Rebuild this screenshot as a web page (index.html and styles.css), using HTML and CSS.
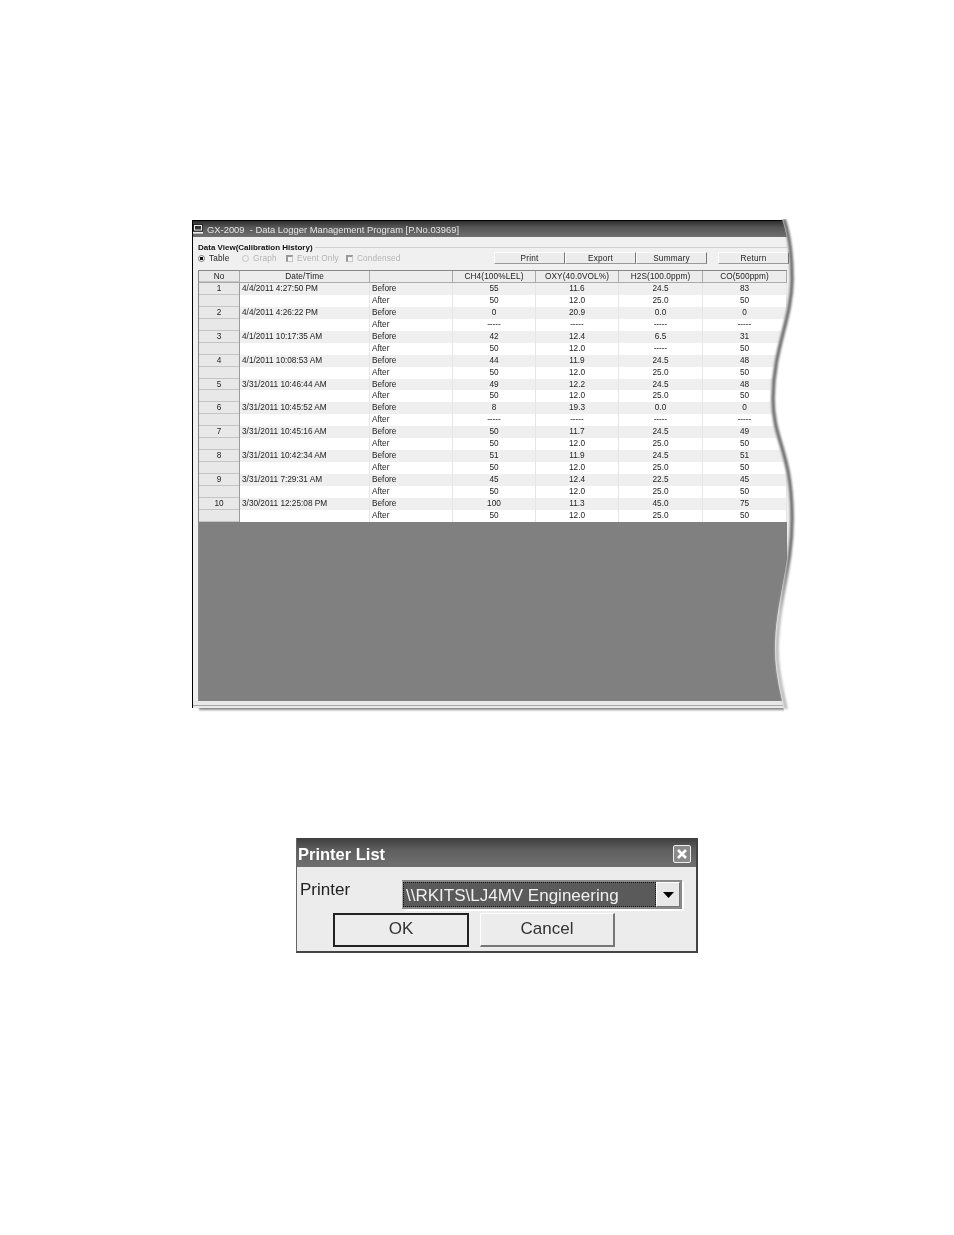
FILE: index.html
```html
<!DOCTYPE html>
<html lang="en">
<head>
  <meta charset="UTF-8" />
  <meta name="viewport" content="width=device-width, initial-scale=1.0" />
  <title>GX-2009 Data Logger Management Program</title>
  <link rel="stylesheet" href="styles.css">
</head>
<body>
  <main class="page">

    <section class="window">
      <div class="titlebar">
        <svg class="app-icon" width="10" height="10" viewBox="0 0 10 10">
          <rect x="0.5" y="0.5" width="9" height="6.5" fill="#e8e8e8" stroke="#111" stroke-width="0.8"/>
          <rect x="2" y="2" width="6" height="3.5" fill="#333"/>
          <rect x="0" y="8" width="10" height="1.6" fill="#eee"/>
        </svg>
        <span>GX-2009 &nbsp;- Data Logger Management Program [P.No.03969]</span>
      </div>

      <div class="panel">
        <div class="legend"><b>Data View(Calibration History)</b></div>

        <div class="controls">
          <label class="option"><i class="radio checked"></i>Table</label>
          <label class="option disabled"><i class="radio"></i>Graph</label>
          <label class="option disabled event"><i class="check"></i>Event Only</label>
          <label class="option disabled"><i class="check"></i>Condensed</label>
          <div class="actions">
            <button>Print</button>
            <button>Export</button>
            <button>Summary</button>
            <button class="return">Return</button>
          </div>
        </div>

        <div class="grid">
          <div class="row head">
            <div class="no">No</div><div class="c">Date/Time</div><div></div><div class="c">CH4(100%LEL)</div><div class="c">OXY(40.0VOL%)</div><div class="c">H2S(100.0ppm)</div><div class="c">CO(500ppm)</div>
          </div>

          <div class="row before"><div class="no">1</div><div>4/4/2011 4:27:50 PM</div><div>Before</div><div class="c">55</div><div class="c">11.6</div><div class="c">24.5</div><div class="c">83</div></div>
          <div class="row"><div class="no"></div><div></div><div>After</div><div class="c">50</div><div class="c">12.0</div><div class="c">25.0</div><div class="c">50</div></div>
          <div class="row before"><div class="no">2</div><div>4/4/2011 4:26:22 PM</div><div>Before</div><div class="c">0</div><div class="c">20.9</div><div class="c">0.0</div><div class="c">0</div></div>
          <div class="row"><div class="no"></div><div></div><div>After</div><div class="c">-----</div><div class="c">-----</div><div class="c">-----</div><div class="c">-----</div></div>
          <div class="row before"><div class="no">3</div><div>4/1/2011 10:17:35 AM</div><div>Before</div><div class="c">42</div><div class="c">12.4</div><div class="c">6.5</div><div class="c">31</div></div>
          <div class="row"><div class="no"></div><div></div><div>After</div><div class="c">50</div><div class="c">12.0</div><div class="c">-----</div><div class="c">50</div></div>
          <div class="row before"><div class="no">4</div><div>4/1/2011 10:08:53 AM</div><div>Before</div><div class="c">44</div><div class="c">11.9</div><div class="c">24.5</div><div class="c">48</div></div>
          <div class="row"><div class="no"></div><div></div><div>After</div><div class="c">50</div><div class="c">12.0</div><div class="c">25.0</div><div class="c">50</div></div>
          <div class="row before"><div class="no">5</div><div>3/31/2011 10:46:44 AM</div><div>Before</div><div class="c">49</div><div class="c">12.2</div><div class="c">24.5</div><div class="c">48</div></div>
          <div class="row"><div class="no"></div><div></div><div>After</div><div class="c">50</div><div class="c">12.0</div><div class="c">25.0</div><div class="c">50</div></div>
          <div class="row before"><div class="no">6</div><div>3/31/2011 10:45:52 AM</div><div>Before</div><div class="c">8</div><div class="c">19.3</div><div class="c">0.0</div><div class="c">0</div></div>
          <div class="row"><div class="no"></div><div></div><div>After</div><div class="c">-----</div><div class="c">-----</div><div class="c">-----</div><div class="c">-----</div></div>
          <div class="row before"><div class="no">7</div><div>3/31/2011 10:45:16 AM</div><div>Before</div><div class="c">50</div><div class="c">11.7</div><div class="c">24.5</div><div class="c">49</div></div>
          <div class="row"><div class="no"></div><div></div><div>After</div><div class="c">50</div><div class="c">12.0</div><div class="c">25.0</div><div class="c">50</div></div>
          <div class="row before"><div class="no">8</div><div>3/31/2011 10:42:34 AM</div><div>Before</div><div class="c">51</div><div class="c">11.9</div><div class="c">24.5</div><div class="c">51</div></div>
          <div class="row"><div class="no"></div><div></div><div>After</div><div class="c">50</div><div class="c">12.0</div><div class="c">25.0</div><div class="c">50</div></div>
          <div class="row before"><div class="no">9</div><div>3/31/2011 7:29:31 AM</div><div>Before</div><div class="c">45</div><div class="c">12.4</div><div class="c">22.5</div><div class="c">45</div></div>
          <div class="row"><div class="no"></div><div></div><div>After</div><div class="c">50</div><div class="c">12.0</div><div class="c">25.0</div><div class="c">50</div></div>
          <div class="row before"><div class="no">10</div><div>3/30/2011 12:25:08 PM</div><div>Before</div><div class="c">100</div><div class="c">11.3</div><div class="c">45.0</div><div class="c">75</div></div>
          <div class="row"><div class="no"></div><div></div><div>After</div><div class="c">50</div><div class="c">12.0</div><div class="c">25.0</div><div class="c">50</div></div>

          <div class="grid-empty"></div>
        </div>
      </div>

      <div class="statusbar"></div>

      <!-- torn right edge of the screenshot -->
      <svg class="torn-edge" width="50" height="496" viewBox="0 0 50 496">
        <defs>
          <filter id="soft" x="-100%" y="-5%" width="300%" height="110%"><feGaussianBlur stdDeviation="0.9"/></filter>
          <linearGradient id="fade" gradientUnits="userSpaceOnUse" x1="0" y1="335" x2="0" y2="395">
            <stop offset="0" stop-color="#6c6c6c"/>
            <stop offset="1" stop-color="#bdbdbd"/>
          </linearGradient>
        </defs>
        <path fill="#fff" d="M26 0C29 9 34 25 34 60C34 100 15 130 15 180C15 222 34 232 34 300C34 350 19 385 19 431C19 455 25 475 29 496L50 496L50 0Z"/>
        <path class="shadow" filter="url(#soft)" stroke="url(#fade)" d="M26 0C29 9 34 25 34 60C34 100 15 130 15 180C15 222 34 232 34 300C34 350 19 385 19 431C19 455 25 475 28 490"/>
      </svg>
    </section>

    <section class="dialog">
      <div class="dialog-title">
        <span>Printer List</span>
        <span class="close">
          <svg width="12" height="12" viewBox="0 0 12 12"><path d="M2 2L10 10M10 2L2 10" stroke="#fff" stroke-width="2.6"/></svg>
        </span>
      </div>
      <div class="dialog-body">
        <div class="printer-row">
          <label class="printer-label">Printer</label>
          <div class="combo">
            <div class="combo-value">\\RKITS\LJ4MV Engineering</div>
            <div class="combo-arrow">
              <svg width="11" height="6" viewBox="0 0 11 6"><path d="M0 0H11L5.5 6Z" fill="#000"/></svg>
            </div>
          </div>
        </div>
        <div class="dialog-buttons">
          <button class="ok">OK</button>
          <button class="cancel">Cancel</button>
        </div>
      </div>
    </section>

  </main>
</body>
</html>
```

FILE: styles.css
```css
* {
  box-sizing: border-box;
}

body {
  margin: 0;
  background-color: #ffffff;
  font-family: "Liberation Sans", Arial, sans-serif;
}

.page {
  display: flex;
  flex-direction: column;
  align-items: flex-start;
  padding: 220px 0 0 192px;
}

/* Data logger window */

.window {
  position: relative;
  display: flex;
  flex-direction: column;
  width: 604px;
  height: 488px;
  background: #f0f0f0;
  border-top: 1px solid #000;
  border-left: 1px solid #000;
  box-shadow: 6px 3px 2px -1px #8a8a8a;
  color: #222;
  font-size: 8.25px;
  filter: blur(0.4px);
}

.titlebar {
  display: flex;
  align-items: center;
  gap: 4px;
  flex: none;
  height: 16px;
  background: linear-gradient(to bottom, #2e2e2e, #565656 40%, #707070);
  color: #e6e6e6;
  font-size: 9.4px;
  white-space: nowrap;
}

.panel {
  display: flex;
  flex-direction: column;
  flex: 1;
  min-height: 0;
  padding: 6px 9px 0 5px;
}

.legend {
  display: flex;
  align-items: center;
  gap: 2px;
  height: 9px;
  line-height: 9px;
  color: #111;
  font-size: 8px;
}

.legend::after {
  content: "";
  flex: 1;
  border-top: 1px solid #d0d0d0;
}

.controls {
  display: flex;
  align-items: center;
  height: 12px;
  margin-bottom: 6px;
}

.option {
  display: flex;
  align-items: center;
  gap: 4px;
  flex: none;
  width: 44px;
  letter-spacing: 0.15px;
  white-space: nowrap;
}

.option.event {
  width: 60px;
}

.option.disabled {
  color: #b4b4b4;
}

.radio {
  flex: none;
  width: 7px;
  height: 7px;
  border: 1px solid #9a9a9a;
  border-radius: 50%;
  background: #fff;
}

.radio.checked {
  background: radial-gradient(circle, #111 0 1.6px, #fff 2px);
  border-color: #777;
}

.disabled .radio {
  border-color: #c4c4c4;
  background: #f0f0f0;
}

.check {
  flex: none;
  width: 7px;
  height: 7px;
  border: 1px solid #c8c8c8;
  border-top: 2px solid #999;
  border-left: 2px solid #999;
  background: #f4f4f4;
}

.actions {
  display: flex;
  margin: 0 -2px 0 auto;
}

.actions button {
  width: 71px;
  height: 12px;
  padding: 0;
  background: #ececec;
  border: 1px solid;
  border-color: #fff #777 #999 #fff;
  color: #222;
  font: 8.25px "Liberation Sans", Arial, sans-serif;
  letter-spacing: 0.2px;
}

.actions .return {
  margin-left: 11px;
}

/* Calibration history grid */

.grid {
  display: flex;
  flex-direction: column;
  flex: 1;
  min-height: 0;
  border-left: 1px solid #888;
  border-top: 1px solid #888;
}

.row {
  display: grid;
  grid-template-columns: 41px 130px 83px 83px 83px 84px 84px;
  flex: none;
  height: 11.95px;
  line-height: 11.95px;
  background: #fff;
  white-space: nowrap;
}

.row > div {
  padding-left: 2px;
  border-right: 1px solid #e6e6e6;
}

.row > .c {
  padding-left: 0;
  text-align: center;
}

.row > .no {
  padding-left: 0;
  text-align: center;
  background: #e8e8e8;
  border-right: 1px solid #9a9a9a;
  box-shadow: inset 0 -1px 0 #c4c4c4;
}

.row.before {
  background: #efefef;
}

.row.head {
  height: 12px;
  line-height: 11px;
  background: #ececec;
  border-bottom: 1px solid #aaa;
}

.row.head > div {
  border-right: 1px solid #aaa;
  letter-spacing: 0.1px;
}

.grid-empty {
  flex: 1;
  background: #808080;
}

.statusbar {
  flex: none;
  height: 7px;
  background: #e8e8e8;
  box-shadow: inset 0 -2px 0 #e8e8e8, inset 0 -3px 0 #a8a8a8;
}

.torn-edge {
  position: absolute;
  top: -2px;
  right: -10px;
}

.shadow {
  fill: none;
  stroke-width: 3.6;
  transform: translateX(2px);
}

/* Printer dialog */

.dialog {
  display: flex;
  flex-direction: column;
  width: 402px;
  height: 115px;
  margin: 130px 0 0 104px;
  background: #ececec;
  border: 2px solid #444;
  border-top: 0;
  border-left: 1px solid #666;
  filter: blur(0.4px);
}

.dialog-title {
  display: flex;
  align-items: center;
  justify-content: space-between;
  flex: none;
  height: 29px;
  padding: 3px 5px 0 1px;
  background: linear-gradient(to bottom, #3d3d3d, #5e5e5e 40%, #707070);
  color: #fff;
  font-size: 16.5px;
  font-weight: bold;
}

.close {
  display: flex;
  align-items: center;
  justify-content: center;
  width: 18px;
  height: 18px;
  background: #8a8a8a;
  border: 1px solid #eee;
  border-radius: 2px;
}

.dialog-body {
  display: flex;
  flex-direction: column;
  gap: 4px;
  padding: 13px 0 0 3px;
}

.printer-row {
  display: flex;
  align-items: flex-start;
  height: 29px;
}

.printer-label {
  width: 102px;
  margin-top: 1px;
  color: #222;
  font-size: 17px;
  line-height: 18px;
}

.combo {
  display: flex;
  width: 280px;
  height: 29px;
  border: 2px solid #8a8a8a;
  border-left: 1px solid #aaa;
  box-shadow: 2px 2px 0 #fff;
}

.combo-value {
  flex: 1;
  padding-left: 3px;
  background: #5a5a5a;
  outline: 1px dotted #111;
  outline-offset: -1px;
  color: #f0f0f0;
  font-size: 17px;
  line-height: 27px;
  white-space: nowrap;
}

.combo-arrow {
  display: flex;
  align-items: center;
  justify-content: center;
  width: 24px;
  background: #e8e8e8;
  border: 1px solid;
  border-color: #fff #777 #777 #fff;
}

.dialog-buttons {
  display: flex;
  gap: 11px;
  margin-left: 33px;
}

.dialog-buttons button {
  height: 34px;
  padding: 0 0 2px;
  background: #ececec;
  border: 1px solid;
  border-color: #fff #777 #777 #fff;
  border-width: 1px 2px 2px 1px;
  color: #333;
  font: 17px "Liberation Sans", Arial, sans-serif;
}

.dialog-buttons .ok {
  width: 136px;
  border: 2px solid #222;
}

.dialog-buttons .cancel {
  width: 135px;
}
```
